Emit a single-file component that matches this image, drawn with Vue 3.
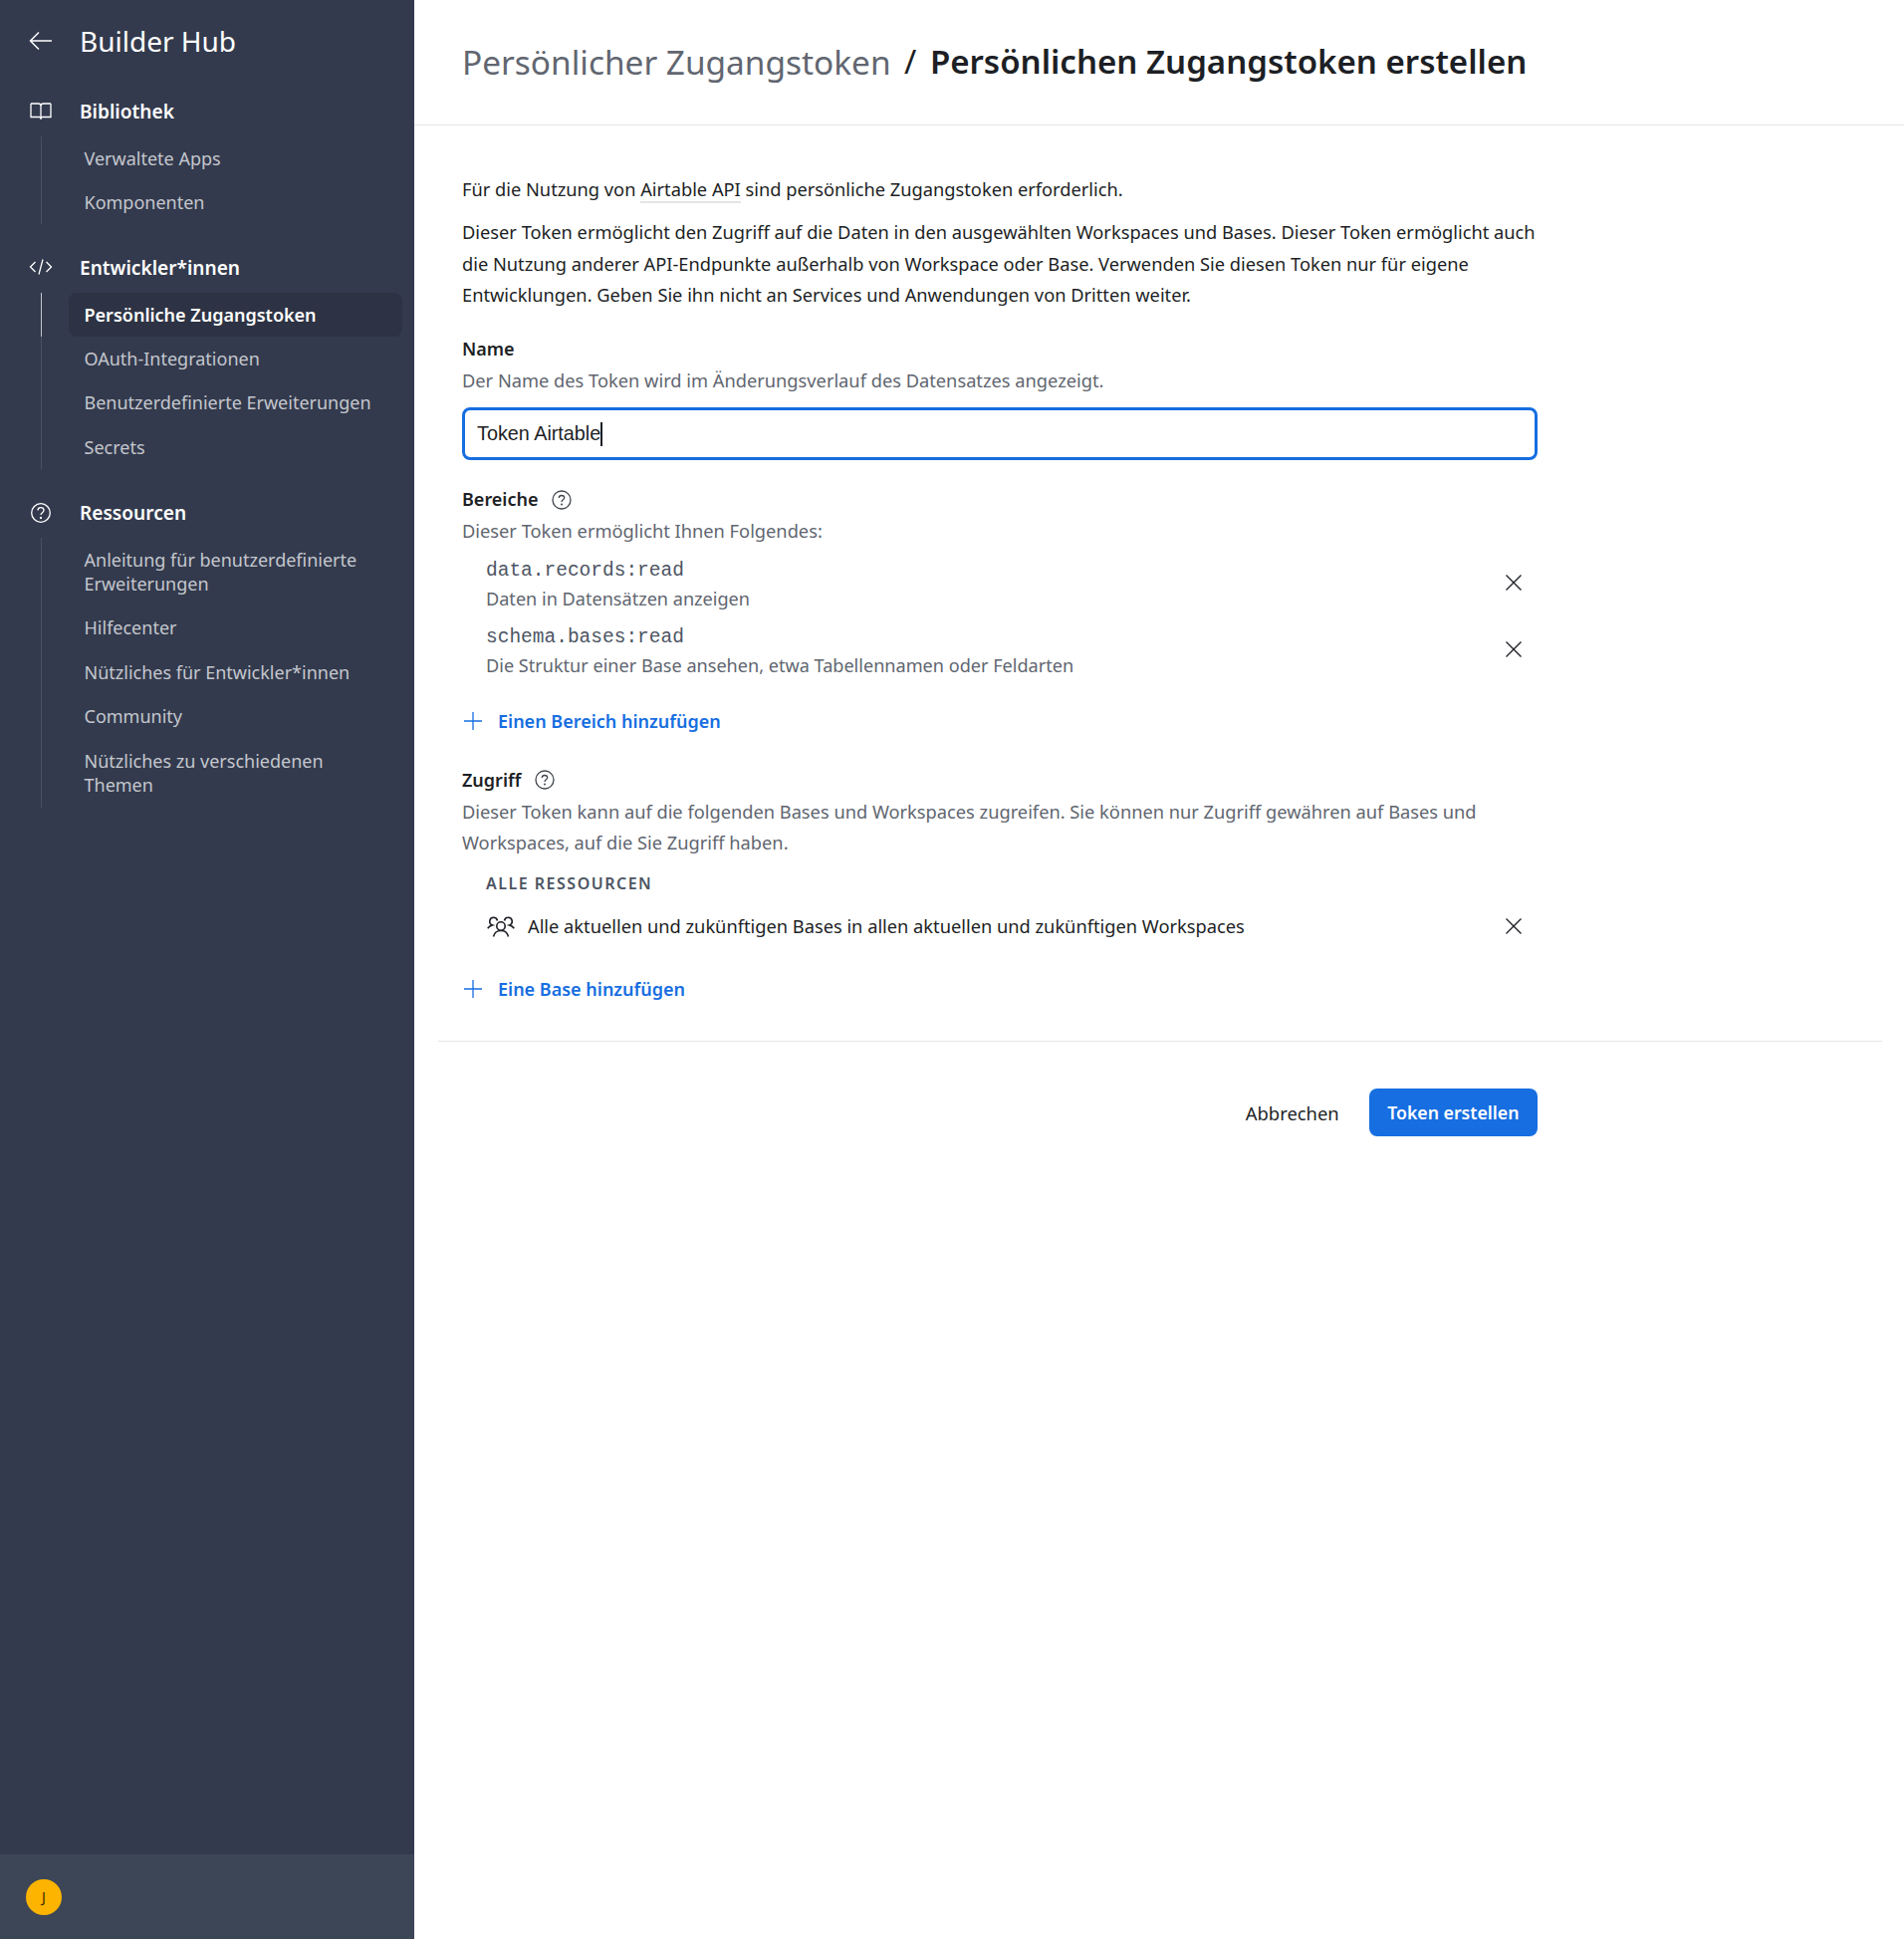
<script setup>
const groups = [
  {
    title: 'Bibliothek',
    icon: 'book',
    items: ['Verwaltete Apps', 'Komponenten'],
  },
  {
    title: 'Entwickler*innen',
    icon: 'code',
    items: ['Persönliche Zugangstoken', 'OAuth-Integrationen', 'Benutzerdefinierte Erweiterungen', 'Secrets'],
    active: 'Persönliche Zugangstoken',
  },
  {
    title: 'Ressourcen',
    icon: 'help',
    items: [
      'Anleitung für benutzerdefinierte Erweiterungen',
      'Hilfecenter',
      'Nützliches für Entwickler*innen',
      'Community',
      'Nützliches zu verschiedenen Themen',
    ],
  },
]

const scopes = [
  { code: 'data.records:read', text: 'Daten in Datensätzen anzeigen' },
  { code: 'schema.bases:read', text: 'Die Struktur einer Base ansehen, etwa Tabellennamen oder Feldarten' },
]
</script>

<template>
  <div class="layout">
    <aside class="sidebar">
      <div class="side-top">
        <div class="brand">
          <svg class="side-icon" width="26" height="26" viewBox="0 0 26 26" fill="none" stroke="#fff" stroke-width="1.5">
            <path d="M24 13H2.500M11 4.500L2.500 13L11 21.500" />
          </svg>
          <span>Builder Hub</span>
        </div>

        <section v-for="group in groups" :key="group.title" class="group">
          <div class="group-title">
            <svg v-if="group.icon === 'book'" class="side-icon" width="24" height="24" viewBox="0 0 24 24" fill="none" stroke="#fff" stroke-width="1.300">
              <path d="M2 4h7.500c1.500 0 2.500 1 2.500 2.500V20M22 4h-7.500C13 4 12 5 12 6.500V20M2 4v13.500h8.500c.8 0 1.500.6 1.500 1.500 0-.9.7-1.500 1.500-1.500H22V4" />
            </svg>
            <svg v-else-if="group.icon === 'code'" class="side-icon raised" width="24" height="24" viewBox="0 0 24 24" fill="none" stroke="#fff" stroke-width="1.300">
              <path d="M6.500 7L1.500 12L6.500 17M17.500 7L22.500 12L17.500 17M14 4.500L10 19.500" />
            </svg>
            <svg v-else class="side-icon" width="24" height="24" viewBox="0 0 24 24" fill="none" stroke="#fff" stroke-width="1.300">
              <circle cx="12" cy="12" r="9.300" />
              <path d="M9 9.500c0-1.700 1.300-2.800 3-2.800s3 1.100 3 2.600c0 2.400-3 2.300-3 4.700" />
              <circle cx="12" cy="17" r="0.500" fill="#fff" />
            </svg>
            <span>{{ group.title }}</span>
          </div>
          <ul class="items">
            <li v-for="item in group.items" :key="item" class="item" :class="{ active: item === group.active }">
              {{ item }}
            </li>
          </ul>
        </section>
      </div>

      <div class="side-footer">
        <div class="avatar">J</div>
      </div>
    </aside>

    <main class="main">
      <header class="page-head">
        <h1>
          <span class="crumb">Persönlicher Zugangstoken</span>
          <span class="slash">/</span>
          <span>Persönlichen Zugangstoken erstellen</span>
        </h1>
      </header>

      <div class="content">
        <div class="form">
          <p class="intro">Für die Nutzung von <span class="link">Airtable API</span> sind persönliche Zugangstoken erforderlich.</p>
          <p class="intro long">
            Dieser Token ermöglicht den Zugriff auf die Daten in den ausgewählten Workspaces und Bases. Dieser Token ermöglicht auch die Nutzung anderer API-Endpunkte außerhalb von Workspace oder Base. Verwenden Sie diesen Token nur für eigene Entwicklungen. Geben Sie ihn nicht an Services und Anwendungen von Dritten weiter.
          </p>

          <div class="field name-field">
            <div class="label">Name</div>
            <div class="hint">Der Name des Token wird im Änderungsverlauf des Datensatzes angezeigt.</div>
            <div class="input">Token Airtable<span class="caret"></span></div>
          </div>

          <div class="field scopes-field">
            <div class="label">
              Bereiche
              <svg class="help" width="20" height="20" viewBox="0 0 20 20" fill="none" stroke="#41454d" stroke-width="1.300">
                <circle cx="10" cy="10" r="9" />
                <path d="M7.300 8c0-1.500 1.200-2.500 2.700-2.500s2.700 1 2.700 2.300c0 2.100-2.700 2-2.700 4.100" />
                <circle cx="10" cy="14.500" r="0.400" fill="#41454d" />
              </svg>
            </div>
            <div class="hint">Dieser Token ermöglicht Ihnen Folgendes:</div>
            <div class="scope-list">
              <div v-for="scope in scopes" :key="scope.code" class="scope">
                <div>
                  <div class="code">{{ scope.code }}</div>
                  <div class="scope-text">{{ scope.text }}</div>
                </div>
                <svg class="close" width="16" height="16" viewBox="0 0 16 16" fill="none" stroke="#1d1f25" stroke-width="1.300">
                  <path d="M.500.500l15 15M15.500.500l-15 15" />
                </svg>
              </div>
            </div>
            <div class="add">
              <svg width="20" height="20" viewBox="0 0 20 20" fill="none" stroke="#166ee1" stroke-width="1.300">
                <path d="M10 1v18M1 10h18" />
              </svg>
              <span>Einen Bereich hinzufügen</span>
            </div>
          </div>

          <div class="field access-field">
            <div class="label">
              Zugriff
              <svg class="help" width="20" height="20" viewBox="0 0 20 20" fill="none" stroke="#41454d" stroke-width="1.300">
                <circle cx="10" cy="10" r="9" />
                <path d="M7.300 8c0-1.500 1.200-2.500 2.700-2.500s2.700 1 2.700 2.300c0 2.100-2.700 2-2.700 4.100" />
                <circle cx="10" cy="14.500" r="0.400" fill="#41454d" />
              </svg>
            </div>
            <div class="hint wrap">Dieser Token kann auf die folgenden Bases und Workspaces zugreifen. Sie können nur Zugriff gewähren auf Bases und Workspaces, auf die Sie Zugriff haben.</div>
            <div class="caps">ALLE RESSOURCEN</div>
            <div class="resource">
              <svg class="people" width="30" height="24" viewBox="0 0 30 24" fill="none" stroke="#1d1f25" stroke-width="1.600">
                <circle cx="15" cy="12" r="4.200" />
                <path d="M7.500 22.500c.8-3.600 3.800-6 7.500-6s6.700 2.400 7.500 6" />
                <path d="M11.500 6.500a3.900 3.900 0 1 0-5 4.400c-2 .5-3.600 1.800-4.800 3.300" />
                <path d="M18.500 6.500a3.900 3.900 0 1 1 5 4.400c2 .5 3.600 1.800 4.800 3.300" />
              </svg>
              <span class="resource-text">Alle aktuellen und zukünftigen Bases in allen aktuellen und zukünftigen Workspaces</span>
              <svg class="close flat" width="16" height="16" viewBox="0 0 16 16" fill="none" stroke="#1d1f25" stroke-width="1.300">
                <path d="M.500.500l15 15M15.500.500l-15 15" />
              </svg>
            </div>
            <div class="add base-add">
              <svg width="20" height="20" viewBox="0 0 20 20" fill="none" stroke="#166ee1" stroke-width="1.300">
                <path d="M10 1v18M1 10h18" />
              </svg>
              <span>Eine Base hinzufügen</span>
            </div>
          </div>
        </div>

        <div class="actions-wrap">
          <div class="actions">
            <button class="cancel">Abbrechen</button>
            <button class="submit">Token erstellen</button>
          </div>
        </div>
      </div>
    </main>
  </div>
</template>

<style>
html,
body {
  margin: 0;
  background: #fff;
}
</style>

<style scoped>
* {
  box-sizing: border-box;
}

.layout {
  display: flex;
  min-height: 1947px;
  font-family: 'Noto Sans', 'Open Sans', sans-serif;
  color: #1d1f25;
  font-size: 18.250px;
}

.sidebar {
  width: 416px;
  flex-shrink: 0;
  background: #333a4d;
  display: flex;
  flex-direction: column;
  justify-content: space-between;
  color: #fff;
}

.side-top {
  padding: 0 12px 0 0;
}

.brand {
  display: flex;
  align-items: center;
  height: 82px;
  margin-bottom: 5.600px;
  font-size: 28px;
}

.brand span {
  margin-left: -1px;
}

.side-icon {
  flex-shrink: 0;
  margin: 0 27px 0 28px;
}

.group {
  margin-bottom: 19.400px;
}

.group-title {
  display: flex;
  align-items: center;
  height: 49px;
  font-size: 19.100px;
  font-weight: 600;
}

.group-title .side-icon {
  margin: -1px 27px 0 29px;
}

.group-title .side-icon.raised {
  margin-top: -3px;
}

.items {
  list-style: none;
  margin: 0 0 0 41px;
  padding: 0;
  border-left: 1px solid #4a5164;
}

.item {
  margin-left: 27px;
  padding: 9.950px 16px 9.950px 15.500px;
  line-height: 24.500px;
  font-size: 18px;
  color: #c4c7cd;
  border-radius: 8px;
}

.item.active {
  position: relative;
  background: #2d3344;
  color: #fff;
  font-weight: 600;
}

.item.active::before {
  content: '';
  position: absolute;
  left: -28px;
  top: 0;
  bottom: 0;
  width: 1px;
  background: #c4c7cd;
}

.side-footer {
  height: 85px;
  background: #3d4657;
  display: flex;
  align-items: center;
  padding-left: 26px;
}

.avatar {
  width: 36px;
  height: 36px;
  border-radius: 50%;
  background: #fcb400;
  color: #3a2a00;
  font-size: 14px;
  display: flex;
  align-items: center;
  justify-content: center;
}

.main {
  flex: 1;
  min-width: 0;
}

.page-head {
  height: 126px;
  border-bottom: 1px solid #e5e5e5;
  padding: 0 0 2px 48px;
  display: flex;
  align-items: center;
}

h1 {
  margin: 0;
  font-size: 33.050px;
  font-weight: 600;
  display: flex;
  gap: 13.500px;
}

.crumb {
  color: #616670;
  font-size: 33.400px;
  font-weight: 400;
}

.slash {
  font-weight: 400;
}

.content {
  padding: 47.500px 22px 0 24px;
}

.form {
  padding: 0 24px 32.500px;
  border-bottom: 1px solid #e5e5e5;
}

.form > * {
  width: 1080px;
}

.intro {
  margin: 0;
  line-height: 31.500px;
}

.intro.long {
  margin-top: 12px;
}

.link {
  border-bottom: 2px solid #e5e5e5;
}

.field {
  margin-top: 23.500px;
}

.scopes-field {
  margin-top: 24px;
}

.label {
  display: flex;
  align-items: center;
  font-size: 18px;
  font-weight: 600;
  line-height: 31px;
}

.help {
  margin-left: 13px;
}

.access-field .help {
  margin-left: 14px;
}

.hint {
  color: #616670;
  line-height: 31px;
}

.input {
  margin-top: 12px;
  height: 53px;
  border: 3px solid #166ee1;
  border-radius: 8px;
  padding: 0 12px;
  display: flex;
  align-items: center;
  font-family: 'Liberation Sans', sans-serif;
  font-size: 19.800px;
}

.caret {
  width: 2px;
  height: 24px;
  background: #1d1f25;
}

.scope-list {
  margin-top: 4.500px;
}

.scope {
  display: flex;
  justify-content: space-between;
  align-items: center;
  padding: 0 16px 0 24px;
  height: 67px;
}

.close {
  flex-shrink: 0;
  margin-top: -2px;
}

.close.flat {
  margin-top: 0;
}

.code {
  font-family: 'Liberation Mono', monospace;
  font-size: 19.500px;
  line-height: 30px;
  color: #4d5563;
}

.scope-text {
  color: #616670;
  font-size: 18.100px;
  line-height: 27px;
}

.add {
  display: flex;
  align-items: center;
  gap: 15px;
  height: 40px;
  margin-top: 17.500px;
  padding-left: 1px;
  color: #166ee1;
  font-size: 18px;
  font-weight: 600;
}

.wrap {
  line-height: 31px;
}

.caps {
  margin: 11px 0 0 24px;
  font-size: 16px;
  line-height: 30px;
  font-weight: 600;
  letter-spacing: 1.500px;
  color: #4d5563;
}

.resource {
  display: flex;
  align-items: center;
  height: 56px;
  padding: 0 16px 0 24px;
}

.people {
  flex-shrink: 0;
}

.resource-text {
  flex: 1;
  margin-left: 12px;
}

.base-add {
  margin-top: 15px;
}

.actions-wrap {
  padding: 47px 24px 0;
}

.actions {
  width: 1080px;
  display: flex;
  justify-content: flex-end;
  gap: 12px;
}

button {
  font: inherit;
  height: 48px;
  border: none;
  border-radius: 8px;
  padding: 0 18px;
  cursor: pointer;
}

.cancel {
  background: none;
  color: #1d1f25;
  font-size: 18.400px;
}

.submit {
  padding: 0 18.500px;
  background: #166ee1;
  color: #fff;
  font-size: 17.700px;
  font-weight: 600;
}
</style>
